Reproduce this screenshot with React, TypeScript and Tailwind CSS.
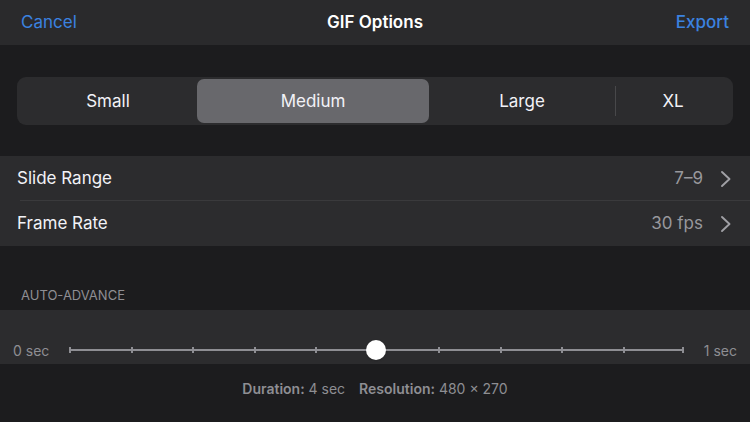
const segments = [
  { label: 'Small', w: 'w-[178px]' },
  { label: 'Medium', w: 'w-[232px]' },
  { label: 'Large', w: 'w-[186px]' },
  { label: 'XL', w: 'flex-1' },
]

function Chevron () {
  return (
    <svg width="12" height="18" viewBox="0 0 12 18" className="ml-[17px]">
      <polyline points="2,2 9.5,9 2,16" fill="none" stroke="#a0a0a5" strokeWidth="1.9" strokeLinecap="round" strokeLinejoin="round" />
    </svg>
  )
}

function Row ({ label, value, divider }: { label: string, value: string, divider?: boolean }) {
  return (
    <div className="relative flex h-[45px] items-center pl-[17px] pr-[18px] pt-px">
      <span className="flex-1 text-[17px] text-[#f2f2f7]">{label}</span>
      <span className="text-[17px] text-[#98989d]">{value}</span>
      <Chevron />
      {divider && <div className="absolute bottom-0 left-[20px] right-0 h-px bg-[#3a3a3c]" />}
    </div>
  )
}

export default function App () {
  const ticks = Array.from({ length: 11 }, (_, i) => i)
  return (
    <div className="h-[422px] w-[750px] overflow-hidden bg-[#1c1c1e]" style={{ fontFamily: 'Inter, "Noto Sans", sans-serif' }}>
      <div className="flex h-[45px] items-center bg-[#2a2a2c] px-[21px] pt-px">
        <span className="w-[120px] text-[17px] text-[#3b82e0]">Cancel</span>
        <span className="flex-1 text-center text-[17px] font-semibold text-white">GIF Options</span>
        <span className="w-[120px] text-right text-[17px] font-medium text-[#3b82e0]">Export</span>
      </div>

      <div className="px-[17px] pt-[32px]">
        <div className="flex h-[48px] items-center rounded-[9px] bg-[#2c2c2e] p-[2px]">
          {segments.map((s, i) => (
            <div key={s.label} className={`relative flex h-full items-center justify-center pt-[2px] ${s.w} ${i === 1 ? 'rounded-[7px] bg-[#68686c]' : ''}`}>
              <span className="text-[17px] text-[#f2f2f7]">{s.label}</span>
              {i === 3 && <div className="absolute left-0 top-[7px] h-[30px] w-px bg-[#48484a]" />}
            </div>
          ))}
        </div>
      </div>

      <div className="mt-[31px] bg-[#2c2c2e]">
        <Row label="Slide Range" value="7–9" divider />
        <Row label="Frame Rate" value="30 fps" />
      </div>

      <div className="px-[21px] pt-[41px] pb-[7px] text-[13px] leading-[16px] text-[#8e8e93]">AUTO-ADVANCE</div>

      <div className="flex h-[54px] items-end bg-[#2c2c2e] pb-[3px]">
        <div className="flex h-[22px] w-full items-center">
          <span className="w-[69px] pl-[13px] text-[14px] text-[#8e8e93]">0 sec</span>
          <div className="relative h-[22px] w-[615px]">
            <div className="absolute left-0 right-0 top-[10px] h-[2px] bg-[#8e8e93]" />
            {ticks.map((t) => (
              <div
                key={t}
                className="absolute top-[8px] h-[6px] w-[2px] bg-[#8e8e93]"
                style={{ left: `${t * 61.5 - (t === 10 ? 2 : 0)}px` }}
              />
            ))}
            <div className="absolute left-[297px] top-[1px] h-[20px] w-[20px] rounded-full bg-white shadow" />
          </div>
          <span className="flex-1 pr-[13px] text-right text-[14px] text-[#8e8e93]">1 sec</span>
        </div>
      </div>

      <div className="pt-[14px] text-center text-[14px] text-[#8e8e93]">
        <span className="font-semibold">Duration:</span> 4 sec<span className="ml-[14px] font-semibold">Resolution:</span> 480 × 270
      </div>
    </div>
  )
}
